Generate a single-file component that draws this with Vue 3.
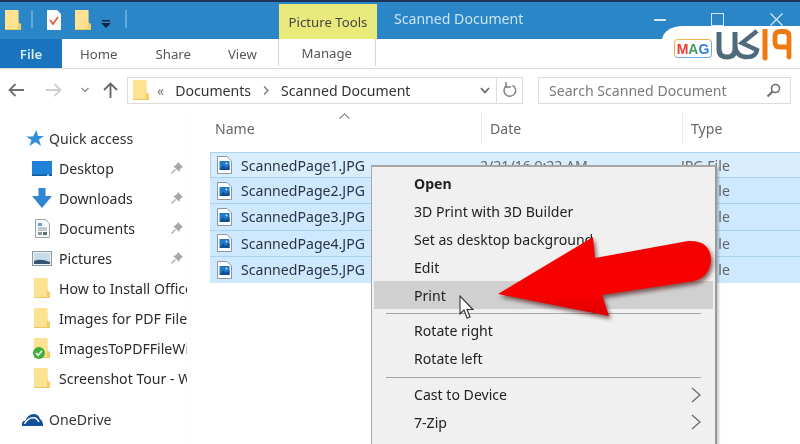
<script setup>
const sideItems = [
  { label: 'Desktop', icon: 'desktop', pin: true },
  { label: 'Downloads', icon: 'down', pin: true },
  { label: 'Documents', icon: 'doc', pin: true },
  { label: 'Pictures', icon: 'pic', pin: true },
  { label: 'How to Install Office 2016', icon: 'folder' },
  { label: 'Images for PDF Files', icon: 'folder' },
  { label: 'ImagesToPDFFileWindows', icon: 'sync' },
  { label: 'Screenshot Tour - Windows', icon: 'folder' }
]
const files = [1, 2, 3, 4, 5].map(n => ({
  name: `ScannedPage${n}.JPG`,
  date: '2/21/16 9:22 AM',
  type: 'JPG File'
}))
const menuGroups = [
  [
    { label: 'Open', bold: true },
    { label: '3D Print with 3D Builder' },
    { label: 'Set as desktop background' },
    { label: 'Edit' },
    { label: 'Print', hot: true }
  ],
  [{ label: 'Rotate right' }, { label: 'Rotate left' }],
  [
    { label: 'Cast to Device', sub: true },
    { label: '7-Zip', sub: true },
    { label: 'Scan with Windows Defender...' }
  ]
]
</script>

<template>
  <div class="window">
    <svg width="0" height="0" class="defs">
      <symbol id="folder" viewBox="0 0 16 20">
        <path d="M0 0H13.500V13L16 14V20H0Z" fill="#fde391" />
        <path d="M13.500 0V13L16 14V20H13L12.500 15L13 13Z" fill="#f3cd68" />
        <path d="M0 19H16V20H0Z" fill="#eec65f" />
      </symbol>
      <symbol id="jpg" viewBox="0 0 15 18">
        <path d="M.5.5H10L14.500 5V17.500H.5Z" fill="#fff" stroke="#8b97a3" />
        <rect x="2.500" y="5" width="10" height="9" fill="#1f78c8" />
        <path d="M2.500 14L6 9.500L9 12L12.500 9V14Z" fill="#0e4f92" />
        <circle cx="9.500" cy="7.500" r="1" fill="#cfe8fb" />
      </symbol>
    </svg>

    <div class="topline"></div>

    <header class="titlebar">
      <svg class="folder-q" width="16" height="20"><use href="#folder" /></svg>
      <span class="qsep sep-a"></span>
      <svg class="doc-q" width="14" height="20" viewBox="0 0 14 20">
        <path d="M0 0H10L14 4V20H0Z" fill="#fbfbfb" />
        <path d="M3 10L6 14L11 7" fill="none" stroke="#d9623f" stroke-width="1.800" />
      </svg>
      <svg class="folder-q2" width="16" height="20"><use href="#folder" /></svg>
      <svg class="drop-q" width="10" height="9" viewBox="0 0 10 9">
        <rect x="1" y="0" width="8" height="1.500" fill="#10233f" />
        <path d="M0 3H10L5 8Z" fill="#10233f" />
      </svg>
      <span class="qsep sep-b"></span>
      <div class="tools-tab">Picture Tools</div>
      <div class="title">Scanned Document</div>
      <div class="winbtns">
        <span class="min"></span>
        <span class="max"></span>
        <svg width="13" height="13" viewBox="0 0 13 13" class="close">
          <path d="M.5.5L12.500 12.500M12.500.5L.5 12.500" stroke="#d3e7f4" stroke-width="1.300" />
        </svg>
      </div>
    </header>

    <nav class="ribbon">
      <div class="file-tab">File</div>
      <span class="tab home">Home</span>
      <span class="tab share">Share</span>
      <span class="tab view">View</span>
      <span class="tab manage">Manage</span>
    </nav>

    <div class="addressrow">
      <svg class="nav back" width="16" height="14" viewBox="0 0 16 14">
        <path d="M16 7H2M7.500 1L1.500 7L7.500 13" fill="none" stroke="#6f6f6f" stroke-width="1.800" />
      </svg>
      <svg class="nav fwd" width="16" height="14" viewBox="0 0 16 14">
        <path d="M0 7H14M8.500 1L14.500 7L8.500 13" fill="none" stroke="#cdcdcd" stroke-width="1.800" />
      </svg>
      <svg class="nav chev" width="8" height="6" viewBox="0 0 8 6">
        <path d="M.5 1L4 4.500L7.500 1" fill="none" stroke="#8c8c8c" stroke-width="1.400" />
      </svg>
      <svg class="nav up" width="15" height="16" viewBox="0 0 15 16">
        <path d="M7.500 16V2M1 8L7.500 1.500L14 8" fill="none" stroke="#6a6a6a" stroke-width="1.900" />
      </svg>
      <div class="addressbox">
        <svg class="addr-folder" width="16" height="20"><use href="#folder" /></svg>
        <span class="crumb-more">«</span>
        <span class="crumb">Documents</span>
        <svg class="crumb-sep" width="6" height="9" viewBox="0 0 6 9">
          <path d="M1 .5L5 4.500L1 8.500" fill="none" stroke="#777" stroke-width="1.300" />
        </svg>
        <span class="crumb">Scanned Document</span>
        <svg class="addr-chev" width="10" height="7" viewBox="0 0 10 7">
          <path d="M1 1L5 5.500L9 1" fill="none" stroke="#666" stroke-width="1.600" />
        </svg>
        <span class="addr-div"></span>
        <svg class="refresh" width="14" height="16" viewBox="0 0 14 16">
          <path d="M9.500 3.300A5.800 5.800 0 1 1 3.500 3.700" fill="none" stroke="#808080" stroke-width="1.500" />
          <path d="M3 0V5H8" fill="none" stroke="#808080" stroke-width="1.500" />
        </svg>
      </div>
      <div class="searchbox">
        <span class="search-text">Search Scanned Document</span>
        <svg width="15" height="15" viewBox="0 0 15 15">
          <circle cx="9.500" cy="5.500" r="4" fill="none" stroke="#707070" stroke-width="1.600" />
          <path d="M6.500 8.500L1.500 13.500" stroke="#707070" stroke-width="2.200" />
        </svg>
      </div>
    </div>

    <main class="content">
      <aside class="sidebar">
        <div class="side-head quick">
          <svg width="18" height="17" viewBox="0 0 18 17">
            <path d="M10.500 0L12 6H18L13 9.500L15 16L9.500 12L3.500 16L5.500 10L0 6.500H7Z" fill="#2f8fdc" />
          </svg>
          <span>Quick access</span>
        </div>
        <div v-for="item in sideItems" :key="item.label" class="side-item">
          <span class="side-icon">
            <svg v-if="item.icon === 'desktop'" width="20" height="15" viewBox="0 0 20 15">
              <rect width="20" height="15" fill="#1f82d6" />
              <rect y="13.500" width="20" height="1.500" fill="#0f5c9f" />
              <rect x="15" y="13.500" width="2" height="1.500" fill="#bcdcf5" />
            </svg>
            <svg v-else-if="item.icon === 'down'" width="20" height="20" viewBox="0 0 20 20">
              <path d="M6.500 0H13.500V8H20L10 20L0 8H6.500Z" fill="#3285d3" />
            </svg>
            <svg v-else-if="item.icon === 'doc'" width="15" height="19" viewBox="0 0 15 19">
              <path d="M.5.5H10.500L14.500 4.500V18.500H.5Z" fill="#f7f8f9" stroke="#9aa3ab" />
              <rect x="3" y="4" width="4" height="3" fill="#6f9fc8" />
              <path d="M3 9H12M3 11H12" stroke="#8c9aa6" />
              <rect x="3" y="13" width="4" height="3" fill="#8c9aa6" />
              <rect x="8" y="13" width="4" height="3" fill="#5d6c79" />
            </svg>
            <svg v-else-if="item.icon === 'pic'" width="20" height="15" viewBox="0 0 20 15">
              <rect x=".5" y=".5" width="19" height="14" fill="#eef2f5" stroke="#8e989f" />
              <rect x="2" y="2" width="16" height="11" fill="#c8dbe9" />
              <path d="M2 10Q8 7 18 11V13H2Z" fill="#38566f" />
            </svg>
            <template v-else>
              <svg width="16" height="20" class="side-folder"><use href="#folder" /></svg>
              <svg v-if="item.icon === 'sync'" class="check" width="12" height="12" viewBox="0 0 12 12">
                <circle cx="6" cy="6" r="6" fill="#3fae3a" />
                <path d="M3 6L5.200 8.300L9 3.800" fill="none" stroke="#fff" stroke-width="1.500" />
              </svg>
            </template>
          </span>
          <span class="side-label">{{ item.label }}</span>
          <svg v-if="item.pin" class="pin" width="12" height="12" viewBox="0 0 12 12">
            <path d="M7 0L12 5L10.500 5.800L8.700 7.800L8.300 10L2.200 3.900L4.300 3.500L6.300 1.500Z" fill="#a8a8a8" />
            <path d="M4.500 7.500L.5 11.500" stroke="#a8a8a8" stroke-width="1.300" />
          </svg>
        </div>
        <div class="side-head onedrive">
          <svg width="21" height="13" viewBox="0 0 21 13">
            <path d="M0 13Q-1 8 3.500 7.500Q6 1 11.500 1Q16.500 1 18 6Q21 7.500 21 13Z" fill="#124f9c" />
            <path d="M2.500 11Q6 4.500 11.500 4.800Q15 5 17 9" fill="none" stroke="#fff" stroke-width="1.500" />
          </svg>
          <span>OneDrive</span>
        </div>
      </aside>

      <section class="filelist">
        <div class="sort-caret">
          <svg width="11" height="6" viewBox="0 0 11 6">
            <path d="M.5 5.500L5.500 1L10.500 5.500" fill="none" stroke="#888" stroke-width="1.200" />
          </svg>
        </div>
        <div class="list-head">
          <span class="col col-name">Name</span>
          <span class="col col-date">Date</span>
          <span class="col col-type">Type</span>
        </div>
        <div class="rows">
          <div v-for="f in files" :key="f.name" class="row">
            <svg class="file-icon" width="15" height="18"><use href="#jpg" /></svg>
            <span class="cell-name">{{ f.name }}</span>
            <span class="cell-date">{{ f.date }}</span>
            <span class="cell-type">{{ f.type }}</span>
          </div>
        </div>
      </section>
    </main>

    <div class="menu">
      <template v-for="(group, g) in menuGroups" :key="g">
        <div v-if="g > 0" class="menu-sep"></div>
        <div
          v-for="it in group"
          :key="it.label"
          class="menu-item"
          :class="{ bold: it.bold, hot: it.hot }"
        >
          <span>{{ it.label }}</span>
          <svg v-if="it.sub" class="sub" width="10" height="16" viewBox="0 0 10 16">
            <path d="M1 1L9 8L1 15" fill="none" stroke="#666" stroke-width="1.200" />
          </svg>
        </div>
      </template>
    </div>

    <svg class="arrow" width="800" height="444" viewBox="0 0 800 444">
      <defs>
        <linearGradient id="red" x1="0" y1="0" x2="0" y2="1">
          <stop offset="0" stop-color="#f20000" />
          <stop offset=".7" stop-color="#fb0000" />
          <stop offset="1" stop-color="#dd0000" />
        </linearGradient>
      </defs>
      <path
        d="M498 294L593 237L595 258L688 241Q711 240 711 261Q709 280 688 282L602 295L609 316Z"
        fill="url(#red)"
      />
    </svg>

    <svg class="cursor" width="16" height="25" viewBox="0 0 16 25">
      <path d="M1 1V19L5 15L8 23L11 22L8 14.500H14Z" fill="#fff" stroke="#333" stroke-width="1.100" />
    </svg>

    <div class="brand">
      <div class="mag"><b class="m">M</b><b class="a">A</b><b class="g">G</b></div>
      <svg width="78" height="32" viewBox="0 0 78 32">
        <path d="M3 3V20Q3 28 11 28Q19 28 19 20V3" fill="none" stroke="#4f6a7b" stroke-width="5" />
        <path d="M41 2L26 14L41 21Q40 28 31 28Q21 28 19 18" fill="none" stroke="#4f6a7b" stroke-width="4.500" />
        <path d="M49 1V29" stroke="#f07a12" stroke-width="5" stroke-linecap="round" />
        <path d="M73 18H63Q59 18 59 13V7Q59 2.500 64 2.500H68Q73 2.500 73 7V28" fill="none" stroke="#f07a12" stroke-width="4.800" stroke-linecap="round" />
      </svg>
    </div>
  </div>
</template>

<style>
html, body { margin: 0; padding: 0; background: #fff; }
</style>

<style scoped>
.window {
  position: relative;
  width: 800px;
  height: 444px;
  overflow: hidden;
  background: #fff;
  display: flex;
  flex-direction: column;
  font-family: "Noto Sans", "Open Sans", sans-serif;
  font-size: 14.1px;
  color: #2b2b2b;
  filter: blur(0.45px);
}
.defs { position: absolute; }
.topline { height: 2px; background: #1d3358; flex: none; }

.titlebar {
  flex: none;
  height: 37px;
  background: #2a86c6;
  display: flex;
  align-items: flex-start;
  box-sizing: border-box;
}
.folder-q { margin: 8px 0 0 5px; }
.qsep { width: 2px; height: 18px; background: #62a9d9; margin-top: 8px; }
.sep-a { margin-left: 10px; }
.doc-q { margin: 8px 0 0 14px; }
.folder-q2 { margin: 8px 0 0 14px; }
.drop-q { margin: 18px 0 0 10px; }
.sep-b { margin-left: 14px; }
.tools-tab {
  width: 98px;
  height: 35px;
  margin: 2px 0 0 152px;
  background: #e8ea7c;
  color: #444;
  font-size: 13.2px;
  display: flex;
  align-items: center;
  justify-content: center;
}
.title { margin: 7px 0 0 17px; color: #c9e4f4; font-size: 14.1px; }
.winbtns { margin-left: auto; display: flex; align-items: flex-start; }
.min { width: 12px; height: 1.500px; background: #d3e7f4; margin: 17px 45px 0 0; }
.max { width: 11px; height: 11px; border: 1px solid #d3e7f4; margin: 11px 46px 0 0; }
.close { margin: 11px 17px 0 0; }

.ribbon {
  flex: none;
  height: 29px;
  background: #fff;
  border-bottom: 1px solid #dadada;
  display: flex;
  align-items: stretch;
  position: relative;
  color: #555;
  font-size: 13.2px;
}
.file-tab {
  width: 62px;
  background: #1a73be;
  color: #d7ecf8;
  font-weight: 600;
  font-size: 13.2px;
  display: flex;
  align-items: center;
  justify-content: center;
}
.tab { display: flex; align-items: center; }
.home { margin-left: 18px; }
.share { margin-left: 38px; }
.view { margin-left: 37px; }
.manage {
  margin-left: 21px;
  width: 96px;
  justify-content: center;
  border-left: 1px solid #d6d6d6;
  border-right: 1px solid #d6d6d6;
  height: 27px;
}

.addressrow {
  flex: none;
  height: 41px;
  display: flex;
  align-items: center;
  padding-top: 1px;
  box-sizing: border-box;
}
.nav { flex: none; }
.back { margin-left: 8px; }
.fwd { margin-left: 22px; }
.chev { margin-left: 19px; }
.up { margin-left: 14px; }
.addressbox {
  margin-left: 9px;
  width: 396px;
  height: 27px;
  box-sizing: border-box;
  border: 1px solid #dcdcdc;
  display: flex;
  align-items: center;
  color: #333;
}
.addr-folder { margin-left: 5px; flex: none; }
.crumb-more { margin: 0 11px 0 8px; color: #777; font-size: 14px; }
.crumb-sep { margin: 0 12px 0 12px; }
.addr-chev { margin-left: auto; }
.addr-div { width: 1px; height: 27px; background: #dcdcdc; margin-left: 6px; }
.refresh { margin: 0 5px 0 6px; }
.searchbox {
  margin-left: 15px;
  width: 253px;
  height: 27px;
  box-sizing: border-box;
  border: 1px solid #dcdcdc;
  display: flex;
  align-items: center;
  justify-content: space-between;
  padding: 0 9px 0 10px;
}
.search-text { color: #7a7a7a; }

.content { flex: 1; display: flex; min-height: 0; }
.sidebar {
  width: 191px;
  flex: none;
  background: #fff;
  border-right: 1px solid #fbfbfb;
  box-sizing: border-box;
  padding-top: 13px;
}
.side-head {
  display: flex;
  align-items: center;
  height: 30px;
  color: #333;
}
.quick { padding-left: 26px; }
.quick span { margin-left: 5px; }
.onedrive { padding-left: 22px; margin-top: 11px; }
.onedrive span { margin-left: 6px; }
.side-item {
  display: flex;
  align-items: center;
  height: 30px;
  width: 187px;
  position: relative;
  overflow: hidden;
}
.side-icon {
  width: 20px;
  margin-left: 32px;
  margin-right: 7px;
  flex: none;
  display: flex;
  justify-content: center;
  position: relative;
}
.check { position: absolute; left: 1px; top: 9px; }
.side-label { white-space: nowrap; flex: none; }
.pin { position: absolute; left: 171px; top: 9px; }

.filelist { flex: 1; min-width: 0; padding-left: 19px; position: relative; }
.sort-caret {
  position: absolute;
  left: 148px;
  top: 3px;
  line-height: 0;
}
.list-head {
  height: 42px;
  display: flex;
  align-items: flex-start;
  color: #666;
  padding-top: 2px;
  box-sizing: border-box;
}
.col { box-sizing: border-box; height: 33px; display: flex; align-items: center; }
.col-name { width: 271px; padding-left: 5px; }
.col-date { width: 201px; padding-left: 8px; border-left: 1px solid #ececec; }
.col-type { padding-left: 8px; border-left: 1px solid #ececec; }
.rows { background: #cde8ff; }
.row {
  height: 26.2px;
  box-sizing: border-box;
  display: flex;
  align-items: center;
  border-bottom: 1px solid #a9d2ee;
  white-space: nowrap;
  overflow: hidden;
}
.row:first-child { background: #d8edfd; border: 1px solid #a9d2ee; border-right: 0; }
.row:first-child .file-icon { margin-left: 6px; }
.row:last-child { border-bottom: 0; }
.file-icon { margin-left: 7px; flex: none; }
.cell-name { margin-left: 9px; width: 239px; flex: none; color: #2b3440; }
.cell-date { width: 201px; flex: none; color: #666; }
.cell-type { color: #666; }

.menu {
  position: absolute;
  left: 371px;
  top: 165px;
  width: 346px;
  height: 300px;
  box-sizing: border-box;
  background: #f0f0f0;
  border: 1px solid #a8a8a8;
  border-right: 2px solid #9a9a9a;
  border-top: 2px solid #a6a6a6;
  padding: 3px 2px 0;
  box-shadow: 2px 2px 2px rgba(0, 0, 0, 0.2);
  color: #222;
}
.menu-item {
  height: 27.8px;
  display: flex;
  align-items: center;
  padding-left: 40px;
  position: relative;
}
.menu-item.bold { font-weight: 700; }
.menu-item.hot { background: #d0d0d0; }
.sub { position: absolute; right: 12px; top: 6px; }
.menu-sep { height: 1px; background: #a6a6a6; margin: 4px 12px 3px; box-sizing: border-box; }

.arrow {
  position: absolute;
  left: 0;
  top: 0;
  filter: drop-shadow(2px 3px 2px rgba(60, 0, 0, 0.6));
  pointer-events: none;
}
.cursor { position: absolute; left: 459px; top: 295px; }

.brand {
  position: absolute;
  top: 26px;
  right: 0;
  width: 138px;
  height: 40px;
  background: #fff;
  border-top-left-radius: 21px 14px;
  display: flex;
  align-items: flex-start;
  padding: 3px 0 0 12px;
  box-sizing: border-box;
}
.mag {
  width: 38px;
  height: 19px;
  margin-top: 10px;
  box-sizing: border-box;
  border: 1px solid #6fb0e8;
  border-top-color: #f0b54a;
  border-left-color: #e8b04a;
  border-radius: 4px;
  display: flex;
  align-items: center;
  justify-content: center;
  font-family: "Liberation Sans", sans-serif;
  font-size: 14px;
  line-height: 1;
}
.m { color: #e53b35; }
.a { color: #3f9e5a; }
.g { color: #2f7de0; }
.brand svg { margin-left: 4px; flex: none; }
</style>
